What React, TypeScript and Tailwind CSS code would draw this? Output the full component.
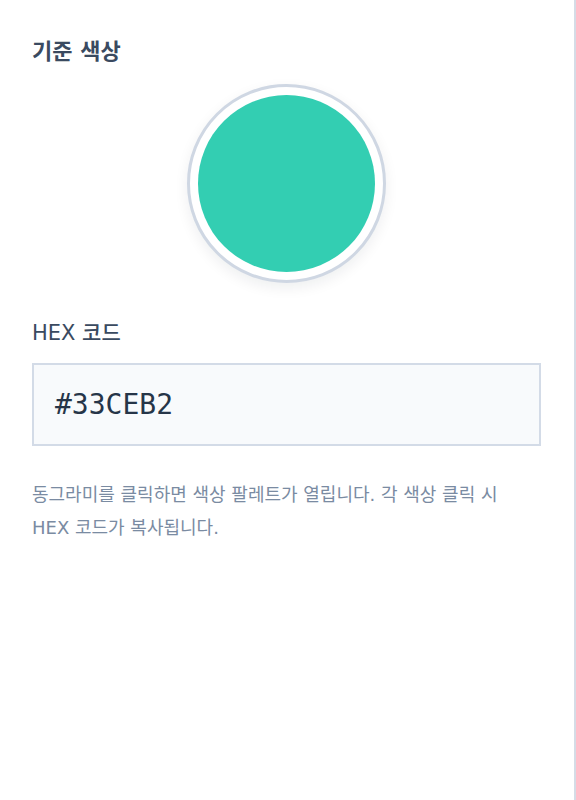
import React from "react";

export default function App() {
  const font = { fontFamily: '"DejaVu Sans", "Noto Sans CJK KR", sans-serif' };
  return (
    <div className="w-[576px] h-[800px] bg-white" style={font}>
      <div className="w-[576px] h-[800px] border-r-2 border-[#d5dce6] pl-8 pr-[33px] pt-[37px]">
        <h2 className="text-[22px] leading-[30px] font-bold text-[#3a4a60]">기준 색상</h2>
        <div className="mt-[17px] flex justify-center">
          <button className="w-[199px] h-[199px] rounded-full border-[3px] border-[#cfd7e3] bg-white p-[8px] shadow-[0_5px_14px_rgba(15,23,42,0.07)]">
            <div className="w-full h-full rounded-full bg-[#33ceb2]" />
          </button>
        </div>
        <div className="mt-[36px] text-[21px] leading-[28px] font-medium text-[#3a4a60]">HEX 코드</div>
        <div className="mt-[16px] h-[83px] border-2 border-[#d3dbe7] bg-[#f8fafc] flex items-center pl-[21px]">
          <span
            className="text-[28px] text-[#263548]"
            style={{ fontFamily: '"DejaVu Sans Mono", monospace' }}
          >
            #33CEB2
          </span>
        </div>
        <p className="mt-[32px] text-[18px] leading-[33px] text-[#7a8ba2]">
          동그라미를 클릭하면 색상 팔레트가 열립니다. 각 색상 클릭 시
          <br />
          HEX 코드가 복사됩니다.
        </p>
      </div>
    </div>
  );
}
